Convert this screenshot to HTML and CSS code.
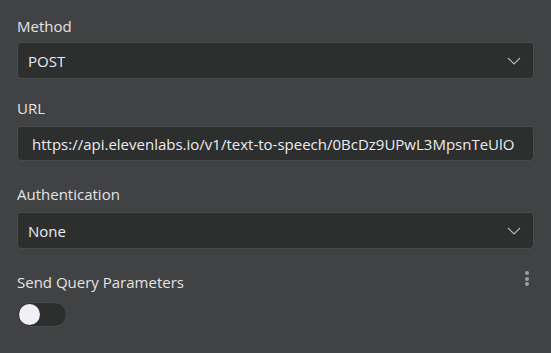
FILE: index.html
```html
<!DOCTYPE html>
<html lang="en">
<head>
  <meta charset="UTF-8">
  <meta name="viewport" content="width=device-width, initial-scale=1.0">
  <title>HTTP Request</title>
  <link rel="stylesheet" href="styles.css">
</head>
<body class="node-layout">
  <main class="node-panel">
    <section class="field field-method">
      <label class="field-label">Method</label>
      <div class="select-box">
        <span class="select-value">POST</span>
        <svg class="chevron" width="14" height="8" viewBox="0 0 14 8"><path d="M1 1 L7 7 L13 1" fill="none" stroke="#b4b6bb" stroke-width="1.1"/></svg>
      </div>
    </section>

    <section class="field field-url">
      <label class="field-label">URL</label>
      <div class="text-box">https://api.elevenlabs.io/v1/text-to-speech/0BcDz9UPwL3MpsnTeUlO</div>
    </section>

    <section class="field field-auth">
      <label class="field-label">Authentication</label>
      <div class="select-box">
        <span class="select-value">None</span>
        <svg class="chevron" width="14" height="8" viewBox="0 0 14 8"><path d="M1 1 L7 7 L13 1" fill="none" stroke="#b4b6bb" stroke-width="1.1"/></svg>
      </div>
    </section>

    <section class="field field-query">
      <div class="label-row">
        <label class="field-label">Send Query Parameters</label>
        <span class="kebab"><i></i><i></i><i></i></span>
      </div>
      <div class="toggle"><span class="knob"></span></div>
    </section>
  </main>
</body>
</html>
```

FILE: styles.css
```css
* {
  margin: 0;
  padding: 0;
  box-sizing: border-box;
}

body.node-layout {
  background: #414244;
  font-family: "Open Sans", Arial, sans-serif;
  color: #e6e6e8;
}

.node-panel {
  width: 551px;
  height: 353px;
  padding: 16px 17px 0 17px;
}

.field-label {
  display: block;
  font-size: 15px;
  line-height: 20px;
  color: #e4e4e6;
}

.field-method .field-label { margin-bottom: 6px; }
.field-method { margin-bottom: 19px; }

.field-url .field-label { margin-bottom: 8px; }
.field-url { margin-bottom: 23px; }

.field-auth .field-label { margin-bottom: 8px; }
.field-auth { margin-bottom: 23px; }

.select-box,
.text-box {
  height: 37px;
  display: flex;
  align-items: center;
  background: #2d2e2e;
  border: 1px solid #4a4b4d;
  border-radius: 4px;
  font-size: 15px;
  color: #ececee;
}

.select-box {
  justify-content: space-between;
  padding: 0 12px 0 10px;
}

.text-box {
  height: 35px;
  padding: 0 14px;
  white-space: nowrap;
  overflow: hidden;
}

.chevron {
  display: block;
}

.label-row {
  display: flex;
  justify-content: space-between;
  align-items: flex-start;
  margin-bottom: 10px;
}

.kebab {
  display: flex;
  flex-direction: column;
  gap: 1.5px;
  margin: -1px 5px 0 0;
}

.kebab i {
  width: 4px;
  height: 4px;
  border-radius: 50%;
  background: #9b9da8;
}

.toggle {
  width: 50px;
  height: 25px;
  border-radius: 13px;
  background: #2d2e2e;
  border: 1px solid #4a4b4d;
  padding: 1px;
}

.knob {
  display: block;
  width: 21px;
  height: 21px;
  border-radius: 50%;
  background: #f0f0f6;
}
```
